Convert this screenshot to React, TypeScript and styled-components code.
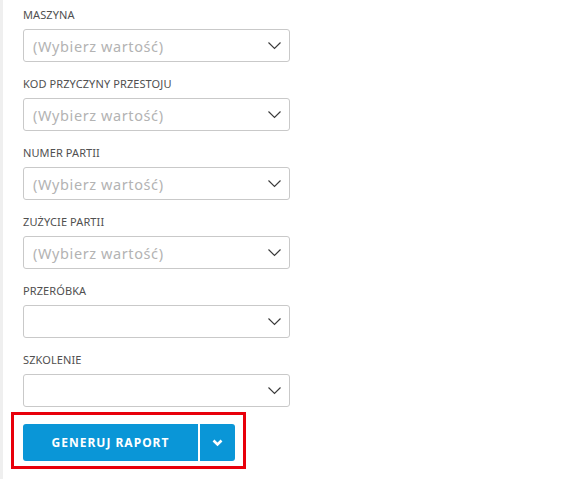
import React from 'react';
import styled, { createGlobalStyle } from 'styled-components';

const GlobalStyle = createGlobalStyle`
  html, body {
    margin: 0;
    padding: 0;
    background: #ffffff;
    font-family: "Noto Sans", "Open Sans", Arial, sans-serif;
  }
`;

const Page = styled.div`
  display: flex;
  min-height: 479px;
`;

const SideStrip = styled.div`
  width: 3px;
  background: #efefef;
  flex-shrink: 0;
`;

const Form = styled.div`
  display: flex;
  flex-direction: column;
  padding: 8px 0 0 20px;
  width: 267px;
`;

const Field = styled.div`
  display: flex;
  flex-direction: column;
  margin-bottom: 15px;
`;

const Label = styled.label`
  font-size: 11px;
  line-height: 13px;
  color: #505050;
  text-transform: uppercase;
  margin-bottom: 8px;
  letter-spacing: 0.1px;
`;

const Select = styled.div`
  height: 33px;
  box-sizing: border-box;
  border: 1px solid #c9c9c9;
  border-radius: 3px;
  display: flex;
  align-items: center;
  justify-content: space-between;
  padding: 0 7px 0 9px;
`;

const Placeholder = styled.span`
  font-size: 14.5px;
  color: #b3b3b3;
  letter-spacing: 0.6px;
`;

const ActionFrame = styled.div`
  margin: -10px 0 0 -12px;
  width: 235px;
  box-sizing: border-box;
  border: 3px solid #e8000b;
  padding: 9px 8px 5px 9px;
`;

const SplitButton = styled.div`
  display: flex;
  height: 37px;
  gap: 2px;
`;

const MainButton = styled.button`
  flex: 1;
  border: none;
  background: #0a96d7;
  color: #ffffff;
  font-family: inherit;
  font-size: 12px;
  font-weight: 700;
  letter-spacing: 1px;
  border-radius: 3px 0 0 3px;
  padding: 0;
`;

const ToggleButton = styled.button`
  width: 35px;
  border: none;
  background: #0a96d7;
  border-radius: 0 3px 3px 0;
  display: flex;
  align-items: center;
  justify-content: center;
  padding: 0;
`;

const Chevron = () => (
  <svg width="15" height="9" viewBox="0 0 15 9">
    <path d="M1.5 1.5l6 6 6-6" fill="none" stroke="#3a3a3a" strokeWidth="1.15" />
  </svg>
);

const fields = [
  { label: 'Maszyna', placeholder: '(Wybierz wartość)' },
  { label: 'Kod przyczyny przestoju', placeholder: '(Wybierz wartość)' },
  { label: 'Numer partii', placeholder: '(Wybierz wartość)' },
  { label: 'Zużycie partii', placeholder: '(Wybierz wartość)' },
  { label: 'Przeróbka', placeholder: '' },
  { label: 'Szkolenie', placeholder: '' },
];

const App: React.FC = () => (
  <>
    <GlobalStyle />
    <Page>
      <SideStrip />
      <Form>
        {fields.map(f => (
          <Field key={f.label}>
            <Label>{f.label}</Label>
            <Select>
              <Placeholder>{f.placeholder}</Placeholder>
              <Chevron />
            </Select>
          </Field>
        ))}
        <ActionFrame>
          <SplitButton>
            <MainButton>GENERUJ RAPORT</MainButton>
            <ToggleButton>
              <svg width="11" height="8" viewBox="0 0 11 8">
                <path d="M1.5 1.5l4 4 4-4" fill="none" stroke="#fff" strokeWidth="2.6" />
              </svg>
            </ToggleButton>
          </SplitButton>
        </ActionFrame>
      </Form>
    </Page>
  </>
);

export default App;
